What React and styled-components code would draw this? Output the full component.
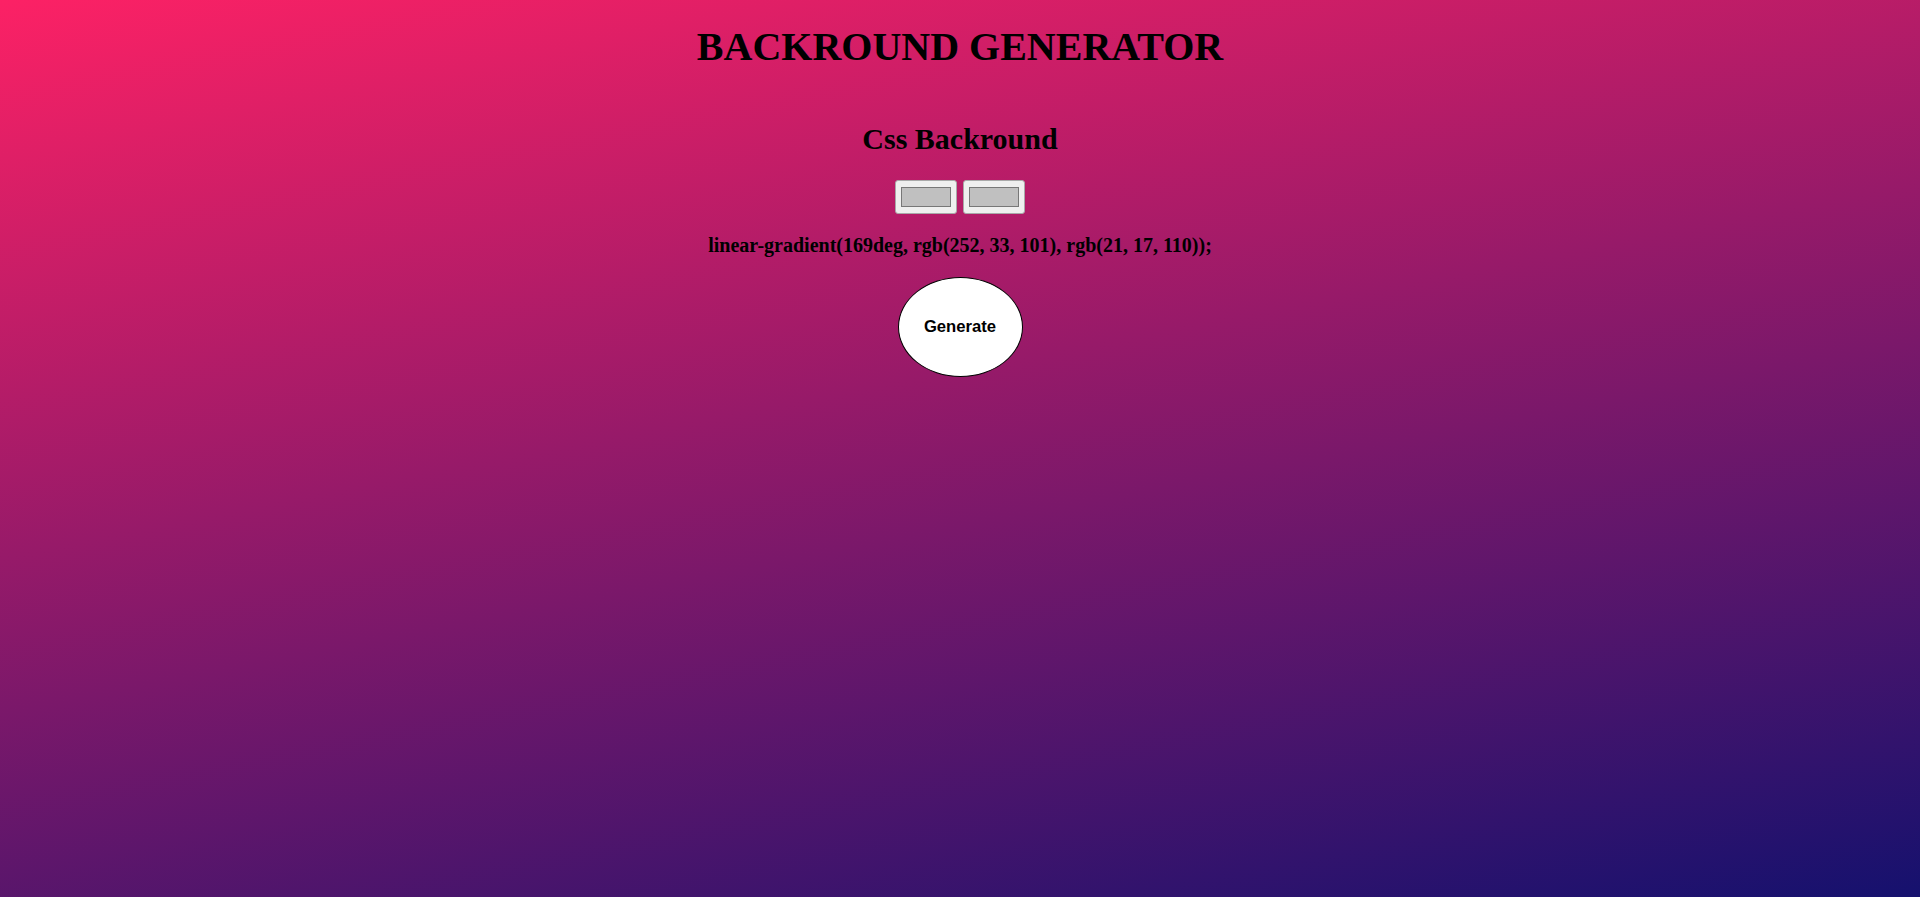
import React, { useState } from "react";
import styled, { createGlobalStyle } from "styled-components";

const GlobalStyle = createGlobalStyle`
  html, body {
    margin: 0;
    padding: 0;
  }
  body {
    min-height: 100vh;
    font-family: "Liberation Serif", "Times New Roman", serif;
    color: #000;
  }
`;

const Page = styled.div`
  min-height: 100vh;
  display: flex;
  flex-direction: column;
  align-items: center;
  background: ${({ $bg }) => $bg};
`;

const Title = styled.h1`
  margin: 24px 0 0;
  font-size: 40px;
  line-height: 46px;
  font-weight: bold;
`;

const Subtitle = styled.h2`
  margin: 52px 0 0;
  font-size: 30px;
  line-height: 34.5px;
  font-weight: bold;
`;

const Pickers = styled.div`
  display: flex;
  gap: 6px;
  margin-top: 23px;
`;

const ColorInput = styled.input`
  box-sizing: border-box;
  width: 62px;
  height: 34px;
  margin: 0;
  padding: 1px 2px;
  border: 1px solid #a9a9a9;
  border-radius: 3px;
  background: #efefef;
  cursor: pointer;
  -webkit-appearance: none;
  appearance: none;

  &::-webkit-color-swatch-wrapper {
    padding: 5px 3px;
  }

  &::-webkit-color-swatch {
    border: 1px solid #777;
    border-radius: 0;
  }
`;

const GradientText = styled.h4`
  margin: 20px 0 0;
  font-size: 20px;
  line-height: 23px;
  font-weight: bold;
`;

const GenerateButton = styled.button`
  box-sizing: border-box;
  width: 125px;
  height: 100px;
  margin-top: 20px;
  border: 1px solid #000;
  border-radius: 50%;
  background: #fff;
  color: #000;
  font-family: "Liberation Sans", Arial, sans-serif;
  font-size: 16.67px;
  font-weight: bold;
  cursor: pointer;
`;

export default function App() {
  const [first, setFirst] = useState("#c0c0c0");
  const [second, setSecond] = useState("#c0c0c0");
  const css = "linear-gradient(169deg, rgb(252, 33, 101), rgb(21, 17, 110))";

  return (
    <>
      <GlobalStyle />
      <Page $bg={css}>
        <Title>BACKROUND GENERATOR</Title>
        <Subtitle>Css Backround</Subtitle>
        <Pickers>
          <ColorInput
            type="color"
            value={first}
            onChange={e => setFirst(e.target.value)}
          />
          <ColorInput
            type="color"
            value={second}
            onChange={e => setSecond(e.target.value)}
          />
        </Pickers>
        <GradientText>{css};</GradientText>
        <GenerateButton>Generate</GenerateButton>
      </Page>
    </>
  );
}
